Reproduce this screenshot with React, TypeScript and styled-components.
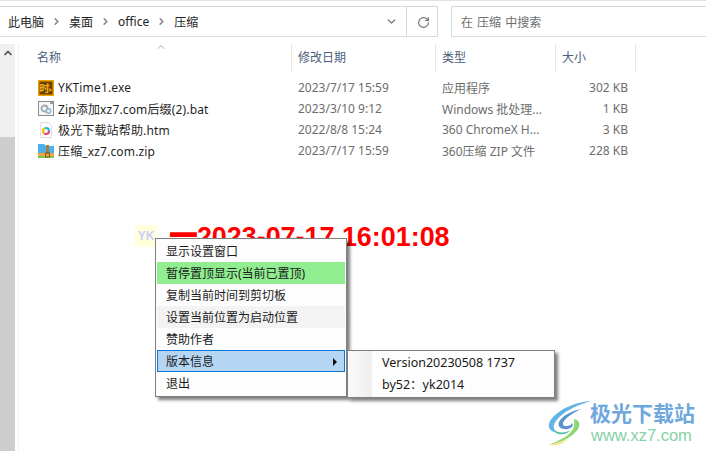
import React from 'react'
import styled, { createGlobalStyle } from 'styled-components'
import { ChevronDown, ChevronRight, ChevronUp, RotateCw } from 'lucide-react'

const GlobalStyle = createGlobalStyle`
  html, body { margin: 0; padding: 0; background: #fff; }
  body { font-family: "Noto Sans", "Noto Sans CJK SC", sans-serif; overflow: hidden; }
`

const Page = styled.div`
  position: relative;
  width: 706px;
  height: 451px;
  overflow: hidden;
  background: #fff;
  border-top: 1px solid #e3e3e3;
  box-sizing: border-box;
`

const NavBar = styled.div`
  display: flex;
  height: 31px;
  margin-top: 5px;
  gap: 13px;
`

const AddressBox = styled.div`
  display: flex;
  align-items: center;
  width: 438px;
  box-sizing: border-box;
  border: 1px solid #d9d9d9;
  border-left: none;
  color: #222;
  font-size: 12px;
`

const Crumbs = styled.div`
  display: flex;
  align-items: center;
  flex: 1;
  padding-left: 8px;
  color: #1e1e1e;
`

const Crumb = styled.span`
  font-size: 12px;
`

const Sep = styled.span`
  display: flex;
  justify-content: center;
  width: 25px;
  color: #7d7d7d;
`

const DropBtn = styled.div`
  display: flex;
  align-items: center;
  justify-content: center;
  width: 22px;
  margin-right: 4px;
  color: #777;
`

const RefreshBtn = styled.div`
  display: flex;
  align-items: center;
  justify-content: center;
  box-sizing: border-box;
  width: 31px;
  height: 100%;
  padding: 1px 0 0 3px;
  border-left: 1px solid #d9d9d9;
  color: #707070;
`

const SearchBox = styled.div`
  flex: 1;
  display: flex;
  align-items: center;
  padding-left: 9px;
  border: 1px solid #d9d9d9;
  border-right: none;
  font-size: 12px;
  word-spacing: 1px;
  color: #6d6d6d;
`

const Body = styled.div`
  display: flex;
  height: 415px;
  margin-top: 7px;
`

const ScrollBar = styled.div`
  display: flex;
  flex-direction: column;
  width: 15px;
  background: #f0f0f0;
`

const ScrollUp = styled.div`
  display: flex;
  justify-content: center;
  padding-top: 3px;
  height: 93px;
  box-sizing: border-box;
  color: #505050;
`

const ScrollThumb = styled.div`
  flex: 1;
  background: #cdcdcd;
`

const Pane = styled.div`
  position: relative;
  flex: 1;
  margin-left: 3px;
  padding-left: 11px;
  border-left: 1px solid #f1f1f1;
`

const Columns = `
  display: grid;
  grid-template-columns: 262px 144px 120px 80px;
`

const HeaderRow = styled.div`
  ${Columns}
  height: 27px;
  margin-bottom: 6px;
`

const HeaderCell = styled.div<{ $first?: boolean }>`
  display: flex;
  align-items: center;
  padding-left: ${p => (p.$first ? 7 : 6)}px;
  padding-bottom: 1px;
  box-sizing: border-box;
  border-right: 1px solid #e5e5e5;
  font-size: 12px;
  color: #4c607a;
`

const SortMark = styled.span`
  position: absolute;
  display: flex;
  left: 136px;
  top: -3px;
  color: #888;
`

const FileRow = styled.div`
  ${Columns}
  height: 21px;
  align-items: center;
  font-size: 12px;
  color: #6d6d6d;
`

const NameCell = styled.div`
  display: flex;
  align-items: center;
  gap: 4px;
  padding-left: 8px;
  color: #1f1f1f;
  letter-spacing: 0.15px;
  white-space: nowrap;
`

const MetaCell = styled.div`
  padding-left: 6px;
  white-space: nowrap;
`

const SizeCell = styled.div`
  text-align: right;
  padding-right: 8px;
  white-space: nowrap;
`

const ClockBadge = styled.div`
  position: absolute;
  left: 135px;
  top: 224px;
  width: 22px;
  height: 22px;
  display: flex;
  align-items: center;
  justify-content: center;
  background: #ffffdc;
  color: #ccccff;
  font: bold 12px "Liberation Sans", sans-serif;
`

const ClockText = styled.div`
  position: absolute;
  left: 170px;
  top: 220px;
  color: #ff0000;
  font: bold 26.9px/32px "Liberation Sans", sans-serif;
  white-space: nowrap;
`

const ClockDash = styled.span`
  display: inline-block;
  transform: translateY(-5px) scaleY(1.8);
`

const Menu = styled.div`
  position: absolute;
  box-sizing: border-box;
  border: 1px solid #808080;
  background: #fdfdfd;
  box-shadow: 3px 3px 3px rgba(0, 0, 0, 0.5);
  color: #1a1a1a;
  font-size: 12px;
`

const MainMenu = styled(Menu)`
  left: 155px;
  top: 237px;
  width: 192px;
  height: 159px;
  padding: 1px;
`

const MenuItem = styled.div<{ $bg?: string; $active?: boolean }>`
  display: flex;
  align-items: center;
  justify-content: space-between;
  box-sizing: border-box;
  height: 22px;
  line-height: 20px;
  padding: 1px 7px 0 ${p => (p.$active ? 8 : 9)}px;
  background: ${p => p.$bg ?? 'transparent'};
  border: ${p => (p.$active ? '1px solid #0a78d7' : 'none')};
`

const Arrow = styled.span`
  width: 0;
  height: 0;
  border-left: 4px solid #111;
  border-top: 4px solid transparent;
  border-bottom: 4px solid transparent;
`

const SubMenu = styled(Menu)`
  left: 347px;
  top: 349px;
  width: 208px;
  height: 48px;
  display: flex;
`

const Gutter = styled.div`
  width: 24px;
  background: linear-gradient(90deg, #fafafa, #eeeeee);
`

const SubList = styled.div`
  padding: 1px 0 0 10px;
  font-size: 12.5px;
  line-height: 22px;
`

const SubItem = styled.div`
  height: 22px;
  white-space: nowrap;
`

const Watermark = styled.div`
  position: absolute;
  left: 547px;
  top: 399px;
  display: flex;
`

const MarkText = styled.div`
  display: flex;
  flex-direction: column;
  margin-left: -1px;
`

const MarkTitle = styled.div`
  font-size: 21px;
  line-height: 27px;
  font-weight: 700;
  color: #6ea8dd;
  white-space: nowrap;
`

const MarkUrl = styled.div`
  padding-left: 1px;
  font: 16.5px/16px "Liberation Sans", sans-serif;
  color: #84d2a4;
  white-space: nowrap;
`

const ExeIcon = () => (
  <svg width="16" height="16" viewBox="0 0 16 16">
    <rect width="16" height="16" fill="#f2a200" />
    <rect x="1.5" y="1.5" width="13" height="13" fill="#6a4204" />
    <text x="1.5" y="11.5" fontSize="10" fontWeight="700" fill="#f7b21a" fontFamily="Noto Sans CJK SC">时</text>
    <path d="M11.5 8l2.5 2-2.5 2z" fill="#f7b21a" />
  </svg>
)

const BatIcon = () => (
  <svg width="16" height="16" viewBox="0 0 16 16">
    <rect x=".5" y=".5" width="15" height="14" fill="#f6f6f6" stroke="#8b8b8b" />
    <rect x="12" y="1" width="3" height="2" fill="#9c9c9c" />
    <circle cx="6.5" cy="7.5" r="3" fill="none" stroke="#a9a9a9" strokeWidth="1.8" />
    <circle cx="10.5" cy="10" r="2.2" fill="#eef4f9" stroke="#8fb4d0" strokeWidth="1.4" />
  </svg>
)

const HtmIcon = () => (
  <svg width="16" height="16" viewBox="0 0 16 16">
    <path d="M2.5.5h8l3 3v12h-11z" fill="#fbfbfb" stroke="#dedede" />
    <circle cx="8" cy="9" r="3" fill="none" stroke="#e8408a" strokeWidth="2.2" strokeDasharray="6.3 12.6" />
    <circle cx="8" cy="9" r="3" fill="none" stroke="#f6b500" strokeWidth="2.2" strokeDasharray="6.3 12.6" strokeDashoffset="-6.3" />
    <circle cx="8" cy="9" r="3" fill="none" stroke="#22b8d8" strokeWidth="2.2" strokeDasharray="6.3 12.6" strokeDashoffset="-12.6" />
  </svg>
)

const ZipIcon = () => (
  <svg width="16" height="16" viewBox="0 0 16 16">
    <path d="M0 1h6l2 2h8v7H0z" fill="#4cb0f0" />
    <rect y="10" width="16" height="3" fill="#f5a63c" />
    <rect y="13" width="16" height="2" fill="#7fc44a" />
    <rect x="8" y="2" width="3" height="9" fill="#a8803c" />
    <rect x="7.5" y="10" width="4" height="4" fill="none" stroke="#7a5a20" />
  </svg>
)

const SwirlLogo = () => (
  <svg width="44" height="46" viewBox="0 0 44 46">
    <path d="M44 1C28 2 10 10 3 21c-3 6 0 11 6 11-3-3-3-7 0-11C15 12 30 5 44 1z" fill="#63b4e4" />
    <path d="M34 9C24 11 15 16 12 22c-2 5 3 8 9 7 4-1 6-4 4-6 0 2-3 3-6 3-3 0-4-2-2-5 3-4 9-8 17-12z" fill="#5b93cf" />
    <path d="M27 19c5 1 7 5 4 10-4 7-15 13-29 16 12-5 21-10 24-16 2-4 1-7 1-10z" fill="#8ed66f" />
    <path d="M2 45c7-1 14-3 19-6-4 4-11 7-19 6z" fill="#f1e45a" />
    <path d="M5 28c4 5 12 6 19 2-6 6-16 6-19-2z" fill="#4fc0a8" />
  </svg>
)

const files = [
  { icon: <ExeIcon />, name: 'YKTime1.exe', date: '2023/7/17 15:59', type: '应用程序', size: '302 KB' },
  { icon: <BatIcon />, name: 'Zip添加xz7.com后缀(2).bat', date: '2023/3/10 9:12', type: 'Windows 批处理...', size: '1 KB' },
  { icon: <HtmIcon />, name: '极光下载站帮助.htm', date: '2022/8/8 15:24', type: '360 ChromeX H...', size: '3 KB' },
  { icon: <ZipIcon />, name: '压缩_xz7.com.zip', date: '2023/7/17 15:59', type: '360压缩 ZIP 文件', size: '228 KB' },
]

const crumbs = ['此电脑', '桌面', 'office', '压缩']

export default function App() {
  return (
    <Page>
      <GlobalStyle />
      <NavBar>
        <AddressBox>
          <Crumbs>
            {crumbs.map((c, i) => (
              <React.Fragment key={c}>
                {i > 0 && (
                  <Sep>
                    <ChevronRight size={11} strokeWidth={3} />
                  </Sep>
                )}
                <Crumb>{c}</Crumb>
              </React.Fragment>
            ))}
          </Crumbs>
          <DropBtn>
            <ChevronDown size={13} strokeWidth={2.6} />
          </DropBtn>
          <RefreshBtn>
            <RotateCw size={13} strokeWidth={2} />
          </RefreshBtn>
        </AddressBox>
        <SearchBox>在 压缩 中搜索</SearchBox>
      </NavBar>
      <Body>
        <ScrollBar>
          <ScrollUp>
            <ChevronUp size={12} strokeWidth={3.4} />
          </ScrollUp>
          <ScrollThumb />
        </ScrollBar>
        <Pane>
          <SortMark>
            <ChevronUp size={12} strokeWidth={1.4} />
          </SortMark>
          <HeaderRow>
            <HeaderCell $first>名称</HeaderCell>
            <HeaderCell>修改日期</HeaderCell>
            <HeaderCell>类型</HeaderCell>
            <HeaderCell>大小</HeaderCell>
          </HeaderRow>
          {files.map(f => (
            <FileRow key={f.name}>
              <NameCell>
                {f.icon}
                {f.name}
              </NameCell>
              <MetaCell>{f.date}</MetaCell>
              <MetaCell>{f.type}</MetaCell>
              <SizeCell>{f.size}</SizeCell>
            </FileRow>
          ))}
        </Pane>
      </Body>

      <ClockBadge>YK</ClockBadge>
      <ClockText>
        <ClockDash>—</ClockDash>2023-07-17 16:01:08
      </ClockText>

      <MainMenu>
        <MenuItem>显示设置窗口</MenuItem>
        <MenuItem $bg="#90ee90">暂停置顶显示(当前已置顶)</MenuItem>
        <MenuItem>复制当前时间到剪切板</MenuItem>
        <MenuItem $bg="#f3f3f3">设置当前位置为启动位置</MenuItem>
        <MenuItem>赞助作者</MenuItem>
        <MenuItem $bg="#b5d6f2" $active>
          版本信息
          <Arrow />
        </MenuItem>
        <MenuItem>退出</MenuItem>
      </MainMenu>

      <SubMenu>
        <Gutter />
        <SubList>
          <SubItem>Version20230508 1737</SubItem>
          <SubItem>by52：yk2014</SubItem>
        </SubList>
      </SubMenu>

      <Watermark>
        <SwirlLogo />
        <MarkText>
          <MarkTitle>极光下载站</MarkTitle>
          <MarkUrl>www.xz7.com</MarkUrl>
        </MarkText>
      </Watermark>
    </Page>
  )
}
